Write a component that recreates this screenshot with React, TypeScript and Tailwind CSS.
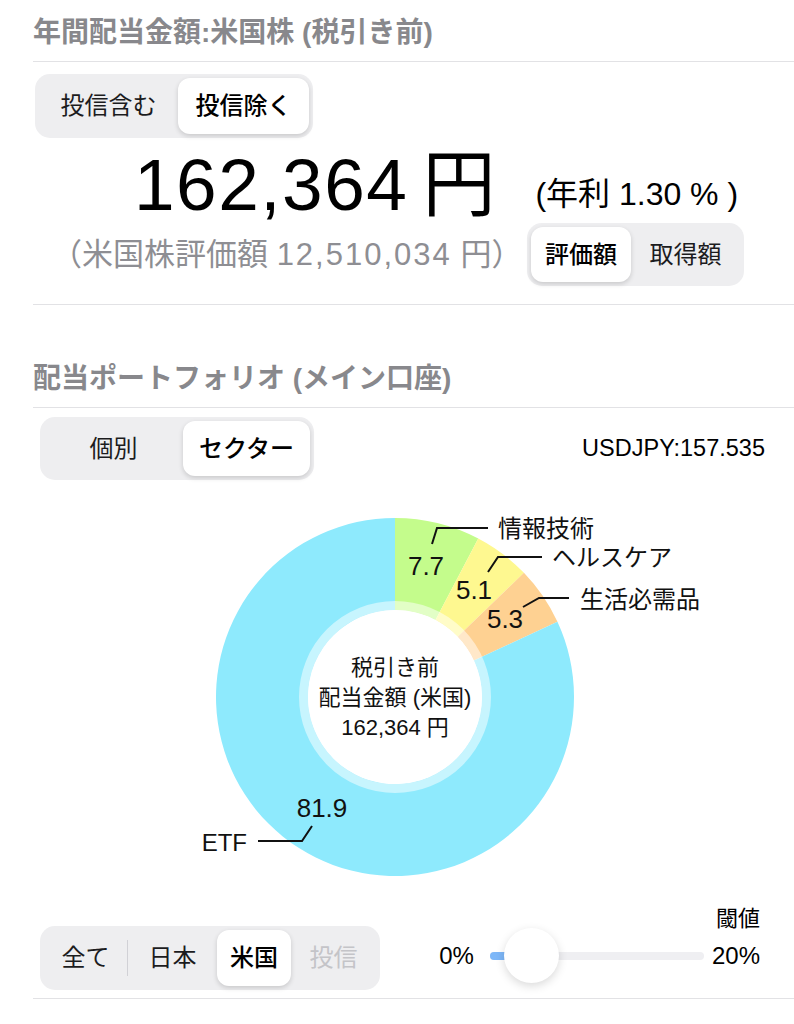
import React from 'react';

const CX = 395;
const CY = 696;
const R_OUT = 179;
const R_RING = 96;
const R_IN = 87;

const sectors = [
  { name: '情報技術', value: 7.7, color: '#c4fc8c' },
  { name: 'ヘルスケア', value: 5.1, color: '#fef890' },
  { name: '生活必需品', value: 5.3, color: '#fed192' },
  { name: 'ETF', value: 81.9, color: '#8eeafd' },
];

// leader lines + label positions (page coords)
const callouts = [
  { text: '情報技術', value: '7.7', vx: 426, vy: 565, line: '432,543 437,527 488,527', lx: 498, ly: 527, anchor: 'start' },
  { text: 'ヘルスケア', value: '5.1', vx: 474, vy: 589, line: '488,571 498,556 542,556', lx: 552, ly: 556, anchor: 'start' },
  { text: '生活必需品', value: '5.3', vx: 505, vy: 618, line: '523,606 539,597 569,597', lx: 580, ly: 598, anchor: 'start' },
  { text: 'ETF', value: '81.9', vx: 322, vy: 807, line: '312,825 302,840 258,840', lx: 247, ly: 841, anchor: 'end' },
];

function polar(r: number, deg: number): [number, number] {
  const a = ((deg - 90) * Math.PI) / 180;
  return [CX + r * Math.cos(a), CY + r * Math.sin(a)];
}

function arcPath(r0: number, r1: number, a0: number, a1: number) {
  const large = a1 - a0 > 180 ? 1 : 0;
  const [x0, y0] = polar(r1, a0);
  const [x1, y1] = polar(r1, a1);
  const [x2, y2] = polar(r0, a1);
  const [x3, y3] = polar(r0, a0);
  return `M${x0} ${y0} A${r1} ${r1} 0 ${large} 1 ${x1} ${y1} L${x2} ${y2} A${r0} ${r0} 0 ${large} 0 ${x3} ${y3} Z`;
}

type SegItem = { label: string; width: string; selected?: boolean; disabled?: boolean; divider?: boolean };

function Segmented({ items, height }: { items: SegItem[]; height: string }) {
  return (
    <div className={`flex p-[4px] rounded-[15px] bg-[#eeeef0] ${height}`}>
      {items.map((it) => (
        <div key={it.label} className={`flex items-center ${it.width}`}>
          {it.divider && <div className="w-px h-[36px] bg-[#d1d1d6]" />}
          <div
            className={`flex-1 h-full flex items-center justify-center text-[24px] rounded-[12px] ${
              it.selected
                ? 'bg-white font-medium text-black shadow-[0_2px_5px_rgba(0,0,0,0.16)]'
                : it.disabled
                  ? 'text-[#c4c4c8]'
                  : 'text-[#1c1c1e]'
            }`}
          >
            {it.label}
          </div>
        </div>
      ))}
    </div>
  );
}

function DonutChart() {
  let acc = 0;
  const arcs = sectors.map((s) => {
    const a0 = acc * 3.6;
    acc += s.value;
    const a1 = acc * 3.6;
    return { ...s, a0, a1 };
  });

  return (
    <svg width={761} height={423} viewBox="33 485 761 423" className="block">
      {arcs.map((a) => (
        <path key={a.name} d={arcPath(R_IN, R_OUT, a.a0, a.a1)} fill={a.color} />
      ))}
      <circle cx={CX} cy={CY} r={(R_RING + R_IN) / 2} fill="none" stroke="white" strokeOpacity={0.5} strokeWidth={R_RING - R_IN} />
      <circle cx={CX} cy={CY} r={R_IN} fill="white" />

      <g fill="#111" fontSize={22} textAnchor="middle" dominantBaseline="central">
        <text x={CX} y={666}>税引き前</text>
        <text x={CX} y={696}>配当金額 (米国)</text>
        <text x={CX} y={726}>162,364 円</text>
      </g>

      {callouts.map((c) => (
        <g key={c.text}>
          <polyline points={c.line} fill="none" stroke="#111" strokeWidth={2} />
          <text x={c.vx} y={c.vy} fontSize={26} textAnchor="middle" dominantBaseline="central" fill="#111">
            {c.value}
          </text>
          <text
            x={c.lx}
            y={c.ly}
            fontSize={24}
            textAnchor={c.anchor as 'start' | 'end'}
            dominantBaseline="central"
            fill="#111"
          >
            {c.text}
          </text>
        </g>
      ))}
    </svg>
  );
}

export default function App() {
  return (
    <div className="w-[794px] min-h-[1024px] bg-white pl-[33px] font-['Liberation_Sans','Noto_Sans_CJK_JP',sans-serif] text-[#111]">
      {/* 年間配当金額 */}
      <div className="pt-[16px] pb-[12px] border-b border-[#e2e2e5] text-[28px] leading-[33px] font-bold text-[#88888c]">
        年間配当金額:米国株 (税引き前)
      </div>

      <div className="border-b border-[#e2e2e5] pb-[18px]">
        <div className="mt-[12px] ml-[2px] flex">
          <Segmented
            height="h-[64px]"
            items={[
              { label: '投信含む', width: 'w-[139px]' },
              { label: '投信除く', width: 'w-[131px]', selected: true },
            ]}
          />
        </div>

        <div className="mt-[10px] flex items-end">
          <div className="ml-[101px] text-[73px] leading-none text-black">
            <span className="tracking-[1.5px]">162,364</span>
            <span className="ml-[14px]">円</span>
          </div>
          <div className="ml-[40px] pb-[11px] text-[32px] leading-none text-black">(年利 1.30 % )</div>
        </div>

        <div className="mt-[2px] flex items-center pr-[50px]">
          <div className="ml-[18px] text-[31px] leading-none text-[#8e8e93]">
            （米国株評価額 <span className="tracking-[2px]">12,510,034</span> 円）
          </div>
          <div className="ml-auto">
            <Segmented
              height="h-[63px]"
              items={[
                { label: '評価額', width: 'w-[100px]', selected: true },
                { label: '取得額', width: 'w-[109px]' },
              ]}
            />
          </div>
        </div>
      </div>

      {/* 配当ポートフォリオ */}
      <div className="pt-[57px] pb-[12px] border-b border-[#e2e2e5] text-[28px] leading-[33px] font-bold text-[#88888c]">
        配当ポートフォリオ (メイン口座)
      </div>

      <div className="mt-[9px] ml-[7px] pr-[29px] flex items-center">
        <Segmented
          height="h-[63px]"
          items={[
            { label: '個別', width: 'w-[139px]' },
            { label: 'セクター', width: 'w-[127px]', selected: true },
          ]}
        />
        <div className="ml-auto text-[23.5px] text-black">USDJPY:157.535</div>
      </div>

      <div className="mt-[6px]">
        <DonutChart />
      </div>

      <div className="pb-[8px] border-b border-[#e2e2e5] flex items-end pr-[34px]">
        <div className="ml-[7px]">
          <Segmented
            height="h-[64px]"
            items={[
              { label: '全て', width: 'w-[83px]' },
              { label: '日本', width: 'w-[90px]', divider: true },
              { label: '米国', width: 'w-[74px]', selected: true },
              { label: '投信', width: 'w-[85px]', disabled: true },
            ]}
          />
        </div>

        <div className="ml-auto flex flex-col items-end pb-[7px]">
          <div className="text-[22px] leading-[20px] text-black">閾値</div>
          <div className="h-[54px] flex items-center text-[24px] text-black">
            <span>0%</span>
            <div className="relative ml-[16px] w-[214px] h-[8px] rounded-full bg-[#efeff2]">
              <div className="absolute left-0 top-0 h-full w-[24px] rounded-full bg-[#7db7f8]" />
              <div className="absolute left-[14px] top-[-24px] w-[55px] h-[55px] rounded-full bg-white shadow-[0_3px_10px_rgba(0,0,0,0.15)]" />
            </div>
            <span className="ml-[8px]">20%</span>
          </div>
        </div>
      </div>
    </div>
  );
}
